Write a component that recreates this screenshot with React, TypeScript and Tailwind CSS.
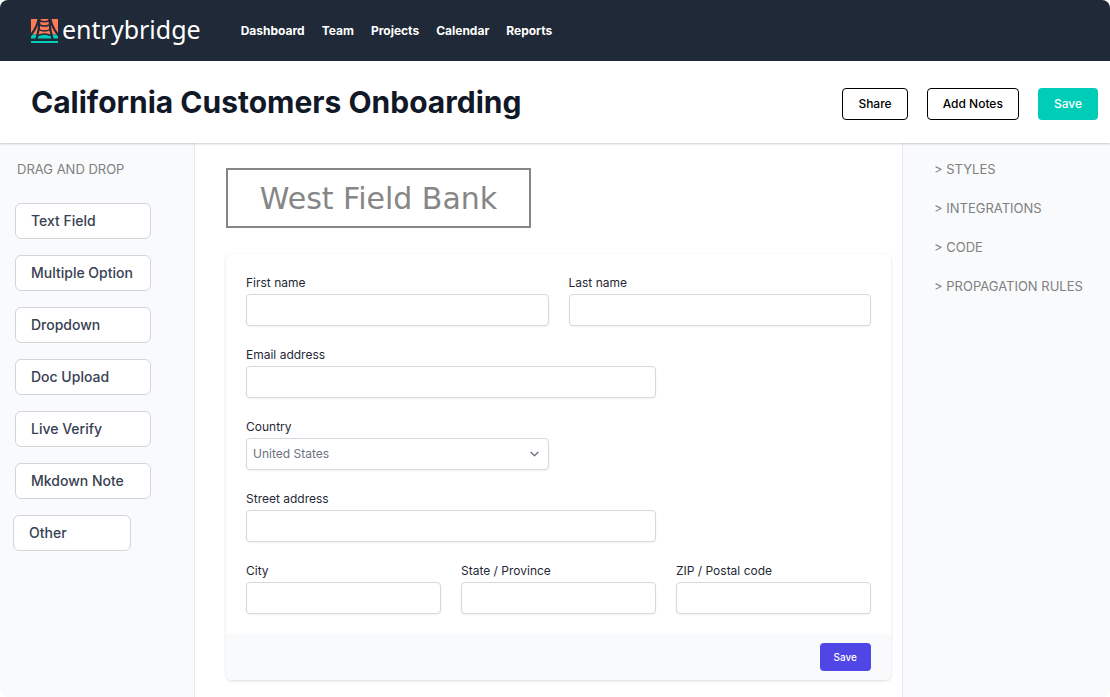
import React, { useId } from "react";

const navItems = ["Dashboard", "Team", "Projects", "Calendar", "Reports"];
const blocks = ["Text Field", "Multiple Option", "Dropdown", "Doc Upload", "Live Verify", "Mkdown Note"];
const panels = ["STYLES", "INTEGRATIONS", "CODE", "PROPAGATION RULES"];

function Logo() {
  return (
    <svg width="27" height="24" viewBox="0 0 27 24" aria-hidden="true">
      <path d="M0 0H27V15.5H0Z" fill="#ff7a59" />
      <path d="M0 15.5H27V19.6H0Z" fill="#00cdb7" />
      <g fill="none" stroke="#1f2937">
        <path d="M8.6 -1C8.6 9 7.2 14.5 5.4 20.5M18.4 -1C18.4 9 19.8 14.5 21.6 20.5" strokeWidth="2.2" />
        <path d="M7.8 -1C6.6 6 3.6 11.5 -0.6 16.5M19.2 -1C20.4 6 23.4 11.5 27.6 16.5" strokeWidth="2.2" />
        <path d="M9 1.8Q13.5 3.6 18 1.8M9 6Q13.5 8.2 18 6M8 10.6Q13.5 13.2 19 10.6" strokeWidth="1.5" />
        <path d="M7 16.6Q13.5 13.2 20 16.6" strokeWidth="1.5" />
      </g>
      <path d="M0 22H27V24H0Z" fill="#00cdb7" />
    </svg>
  );
}

function Field({ label, span }: { label: string; span: string }) {
  const id = useId();
  return (
    <div className={span}>
      <label htmlFor={id} className="block text-[12px] leading-[17px] text-[#1f2937]">
        {label}
      </label>
      <input
        id={id}
        type="text"
        className="mt-[3px] block h-8 w-full rounded border border-[#d5d8de] bg-white px-1.5 text-[12px] shadow-xs outline-none"
      />
    </div>
  );
}

function CountryField() {
  const id = useId();
  return (
    <div className="col-span-3">
      <label htmlFor={id} className="block text-[12px] leading-[17px] text-[#1f2937]">
        Country
      </label>
      <div className="relative mt-[3px]">
        <select
          id={id}
          className="block h-8 w-full appearance-none rounded border border-[#d5d8de] bg-white px-1.5 text-[12px] text-[#6b7280] shadow-xs outline-none"
        >
          <option>United States</option>
        </select>
        <svg
          className="pointer-events-none absolute top-3 right-2.5"
          width="9"
          height="8"
          viewBox="0 0 9 8"
          fill="none"
          stroke="#6b7280"
          strokeWidth="1.3"
          strokeLinecap="round"
          strokeLinejoin="round"
          aria-hidden="true"
        >
          <path d="M1 2.2L4.5 5.7L8 2.2" />
        </svg>
      </div>
    </div>
  );
}

export default function App() {
  return (
    <div className="flex min-h-screen flex-col overflow-hidden rounded-lg bg-white font-['Inter',sans-serif]">
      <header className="flex h-[61px] items-center bg-[#1f2937] px-[31px]">
        <a href="#" className="flex items-center gap-1 text-white">
          <Logo />
          <span className="pb-1 font-['Noto_Sans',sans-serif] text-[25px] leading-8">entrybridge</span>
        </a>
        <nav className="ml-10 flex gap-[17px] text-[12px] font-bold text-white">
          {navItems.map((item) => (
            <a key={item} href="#">
              {item}
            </a>
          ))}
        </nav>
      </header>

      <div className="relative flex h-[82px] items-center justify-between bg-white pr-3 pl-[31px] shadow-[0_1px_2px_rgba(0,0,0,0.2)]">
        <h1 className="text-[30px] leading-9 font-bold text-[#111827]">California Customers Onboarding</h1>
        <div className="flex gap-[19px] pt-1 text-[12px] font-medium">
          <button className="h-8 rounded border border-black px-[15px] text-black">Share</button>
          <button className="h-8 rounded border border-black px-[15px] text-black">Add Notes</button>
          <button className="h-8 rounded bg-[#00cdb7] px-4 text-white">Save</button>
        </div>
      </div>

      <div className="flex grow">
        <aside className="w-[195px] shrink-0 border-r border-[#e8eaed] bg-[#f9fafb] px-[15px] pt-4">
          <h2 className="pl-0.5 text-[13px] leading-5 text-[#808080]">DRAG AND DROP</h2>
          <div className="mt-6 flex flex-col gap-4 text-[14px] font-medium text-[#374151]">
            {blocks.map((block) => (
              <button key={block} className="h-9 w-[136px] rounded-md border border-[#d1d5db] bg-white px-[15px] pb-0.5 text-left">
                {block}
              </button>
            ))}
            <button className="-ml-0.5 h-9 w-[118px] rounded-md border border-[#d1d5db] bg-white px-[15px] pb-0.5 text-left">
              Other
            </button>
          </div>
        </aside>

        <main className="min-w-0 grow pt-[25px] pr-[11px] pb-4 pl-[31px]">
          <div className="flex h-[60px] w-[305px] items-center justify-center border-2 border-[#868686] font-['DejaVu_Sans',sans-serif] text-[30px] whitespace-nowrap text-[#868686]">
            West Field Bank
          </div>
          <form className="mt-[26px] overflow-hidden rounded-md bg-white shadow-[0_1px_3px_rgba(0,0,0,0.14)]" onSubmit={(e) => e.preventDefault()}>
            <div className="grid grid-cols-6 gap-5 p-5">
              <Field label="First name" span="col-span-3" />
              <Field label="Last name" span="col-span-3" />
              <Field label="Email address" span="col-span-4" />
              <div className="col-span-6">
                <div className="grid grid-cols-6 gap-5">
                  <CountryField />
                </div>
              </div>
              <Field label="Street address" span="col-span-4" />
              <Field label="City" span="col-span-2 col-start-1" />
              <Field label="State / Province" span="col-span-2" />
              <Field label="ZIP / Postal code" span="col-span-2" />
            </div>
            <div className="flex justify-end bg-[#f9fafb] px-5 py-[9px]">
              <button type="submit" className="h-7 rounded-sm bg-[#4f46e5] px-[14px] text-[10px] font-medium text-white">
                Save
              </button>
            </div>
          </form>
        </main>

        <aside className="w-[208px] shrink-0 border-l border-[#e8eaed] bg-[#f9fafb] pt-4 pl-[31px]">
          <div className="flex flex-col items-start gap-[19px] text-[13px] leading-5 text-[#808080]">
            {panels.map((panel) => (
              <button key={panel} className="whitespace-nowrap">
                &gt; {panel}
              </button>
            ))}
          </div>
        </aside>
      </div>
    </div>
  );
}
